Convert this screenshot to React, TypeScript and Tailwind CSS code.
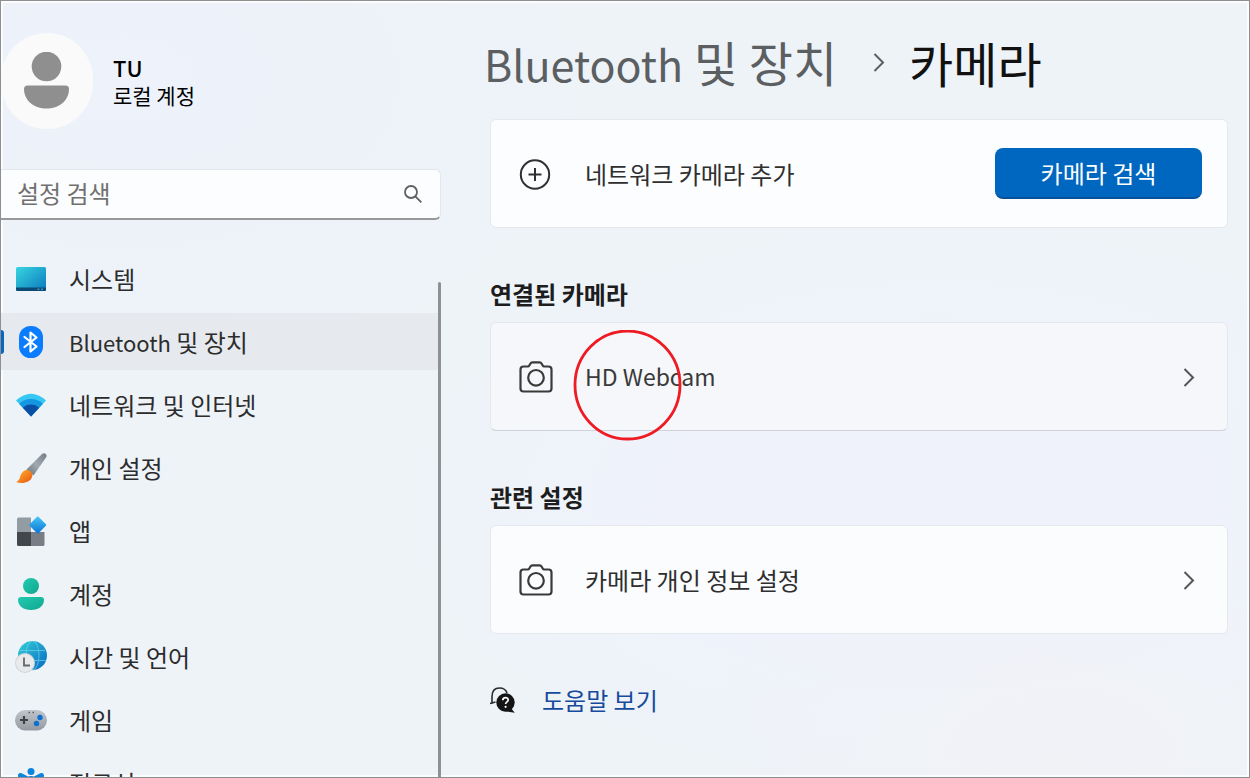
import type { ReactNode } from "react";

function SystemIcon() {
  return (
    <svg width="32" height="32" viewBox="0 0 32 32" aria-hidden="true">
      <defs>
        <linearGradient id="sys" x1="0" y1="0" x2="1" y2="1">
          <stop offset="0" stopColor="#38d5e0" />
          <stop offset="1" stopColor="#0a78bd" />
        </linearGradient>
      </defs>
      <rect x="1" y="4" width="30" height="24" rx="1.5" fill="url(#sys)" />
      <path d="M1 24.5h30v2a1.500 1.500 0 0 1-1.500 1.500h-27a1.500 1.500 0 0 1-1.500-1.500z" fill="#0b4a75" />
      <path d="M22.500 26.200h2M26 26.200h2" stroke="#5fb4d8" strokeWidth="1" />
    </svg>
  );
}

function BluetoothIcon() {
  return (
    <svg width="32" height="32" viewBox="0 0 32 32" aria-hidden="true">
      <rect x="4" y="0" width="24" height="32" rx="11.500" fill="#0a7cff" />
      <path d="M9.500 11l12 9.500-6 5V6.500l6 5-12 9.500" fill="none" stroke="#fff" strokeWidth="2.200" strokeLinejoin="round" strokeLinecap="round" />
    </svg>
  );
}

function NetworkIcon() {
  return (
    <svg width="32" height="32" viewBox="0 0 32 32" aria-hidden="true">
      <defs>
        <clipPath id="fan">
          <path d="M1 11.500Q16-2 31 11.500L16 27.500z" />
        </clipPath>
      </defs>
      <g clipPath="url(#fan)">
        <rect width="32" height="32" fill="#35c8f3" />
        <circle cx="16" cy="27" r="17" fill="#1496e0" />
        <circle cx="16" cy="27" r="11.500" fill="#0a4fa3" />
      </g>
    </svg>
  );
}

function BrushIcon() {
  return (
    <svg width="32" height="32" viewBox="0 0 32 32" aria-hidden="true">
      <defs>
        <linearGradient id="handle" x1="1" y1="0" x2="0" y2="1">
          <stop offset="0" stopColor="#737b83" />
          <stop offset=".5" stopColor="#a2aab1" />
          <stop offset="1" stopColor="#6a7279" />
        </linearGradient>
        <linearGradient id="tip" x1="0" y1="0" x2="1" y2="1">
          <stop offset="0" stopColor="#ffb62e" />
          <stop offset="1" stopColor="#ea5213" />
        </linearGradient>
      </defs>
      <path d="M27 2c2.500-2.200 6 .5 4 3.500L18.500 23.500l-7-6z" fill="url(#handle)" />
      <path d="M1 30c3.500-1.500 3.500-3.500 4.500-6.500 1.500-5 6.500-7 9.500-4.500 4 3 2.500 8-1.500 10.300C9.500 31.500 5 31.500 1 30z" fill="url(#tip)" />
    </svg>
  );
}

function AppsIcon() {
  return (
    <svg width="32" height="32" viewBox="0 0 32 32" aria-hidden="true">
      <defs>
        <linearGradient id="dia" x1="0" y1="0" x2="1" y2="1">
          <stop offset="0" stopColor="#45c7f7" />
          <stop offset="1" stopColor="#0a73d4" />
        </linearGradient>
      </defs>
      <path d="M3.500 2.500H16V17H2V4a1.500 1.500 0 0 1 1.500-1.500z" fill="#939ba3" />
      <path d="M2 17h14v14H3.500A1.500 1.500 0 0 1 2 29.500z" fill="#42474b" />
      <path d="M16 17h13.500v12.500A1.500 1.500 0 0 1 28 31H16z" fill="#777e86" />
      <rect x="16.500" y="3.700" width="12.500" height="12.500" rx="1" transform="rotate(45 22.700 10)" fill="url(#dia)" />
    </svg>
  );
}

function AccountIcon() {
  return (
    <svg width="32" height="32" viewBox="0 0 32 32" aria-hidden="true">
      <defs>
        <linearGradient id="acct" x1="0" y1="0" x2="1" y2="1">
          <stop offset="0" stopColor="#22cbb0" />
          <stop offset="1" stopColor="#10a78f" />
        </linearGradient>
      </defs>
      <circle cx="16" cy="8" r="8" fill="url(#acct)" />
      <path d="M6 19h20q3 0 3 3c0 6-5.500 10-13 10S3 28 3 22q0-3 3-3z" fill="url(#acct)" />
    </svg>
  );
}

function TimeIcon() {
  return (
    <svg width="32" height="32" viewBox="0 0 32 32" aria-hidden="true">
      <defs>
        <linearGradient id="globe" x1="0" y1="0" x2="1" y2="1">
          <stop offset="0" stopColor="#33cfd6" />
          <stop offset="1" stopColor="#0868c4" />
        </linearGradient>
      </defs>
      <circle cx="17.500" cy="14.500" r="14.500" fill="url(#globe)" />
      <g fill="none" stroke="#7fe0ee" strokeWidth="1" opacity=".6">
        <ellipse cx="17.500" cy="14.500" rx="6.500" ry="14.500" />
        <path d="M5 9.500h25M4 19.500h27" />
      </g>
      <circle cx="10" cy="22" r="10" fill="#d2d4d6" />
      <circle cx="10" cy="22" r="9" fill="#e9eaeb" />
      <path d="M9 16.500v8h6" fill="none" stroke="#65696d" strokeWidth="1.800" />
    </svg>
  );
}

function GameIcon() {
  return (
    <svg width="32" height="32" viewBox="0 0 32 32" aria-hidden="true">
      <defs>
        <linearGradient id="pad" x1="0" y1="0" x2="0" y2="1">
          <stop offset="0" stopColor="#c1c6cb" />
          <stop offset="1" stopColor="#9299a1" />
        </linearGradient>
      </defs>
      <rect x="0" y="6" width="32" height="20.500" rx="10.200" fill="url(#pad)" />
      <path d="M9 12v8M5 16h8" stroke="#3e4246" strokeWidth="2.200" />
      <path d="M13.500 8.500h1.500M17.500 8.500h1.500" stroke="#555b60" strokeWidth="1.500" />
      <circle cx="25" cy="13.500" r="2.700" fill="#0a70d2" />
      <circle cx="21.500" cy="19.500" r="2.700" fill="#0a70d2" />
    </svg>
  );
}

function AccessibilityIcon() {
  return (
    <svg width="32" height="32" viewBox="0 0 32 32" aria-hidden="true">
      <circle cx="16" cy="4.500" r="3.500" fill="#0b84e0" />
      <path d="M5.500 8.500l7 3.500h7l7-3.500" fill="none" stroke="#0b84e0" strokeWidth="5" strokeLinecap="round" strokeLinejoin="round" />
      <path d="M16 12v6M16 18l-5 10M16 18l5 10" stroke="#0b84e0" strokeWidth="6" strokeLinecap="round" />
    </svg>
  );
}

function CameraIcon() {
  return (
    <svg width="34" height="32" viewBox="0 0 34 32" fill="none" stroke="#3a3a3a" strokeWidth="2.200" strokeLinejoin="round" aria-hidden="true">
      <path d="M4.500 5.500h4.300q1 0 1.500-1l1-1.800Q12 1.300 13.500 1.300h7q1.500 0 2.200 1.400l1 1.800q.5 1 1.500 1h4.300q3 0 3 3v19q0 3-3 3h-25q-3 0-3-3v-19q0-3 3-3z" />
      <circle cx="17" cy="16.800" r="7.800" />
    </svg>
  );
}

function PlusIcon() {
  return (
    <svg width="34" height="32" viewBox="0 0 34 32" fill="none" stroke="#303030" strokeWidth="2" aria-hidden="true">
      <circle cx="16" cy="16.500" r="14.200" />
      <path d="M16 10v13M9.500 16.500h13" />
    </svg>
  );
}

function Chevron({ className }: { className: string }) {
  return (
    <svg width="12" height="20" viewBox="0 0 12 20" fill="none" stroke="currentColor" strokeWidth="2" className={className} aria-hidden="true">
      <path d="M1.500 2L10 10.500 1.500 19" />
    </svg>
  );
}

function HelpIcon() {
  return (
    <svg width="26" height="28" viewBox="0 0 26 28" aria-hidden="true">
      <path d="M2 17.500V10.500C2 5 5 2 9.500 2c4 0 6.500 2 7.500 5" fill="none" stroke="#2c2c2c" strokeWidth="1.600" />
      <path d="M0 17.500l5.500-1.500" stroke="#2c2c2c" strokeWidth="1.600" />
      <circle cx="15.500" cy="16.500" r="9.200" fill="#151515" />
      <path d="M20 21l4.800 5.800-9.300-1.500z" fill="#151515" />
      <path d="M12.800 14.200c0-3.600 5.400-3.400 5.400-.3 0 2-2.600 2-2.600 4.200" fill="none" stroke="#fff" strokeWidth="1.700" />
      <circle cx="15.600" cy="20.800" r="1.100" fill="#fff" />
    </svg>
  );
}

const items: { label: ReactNode; icon: ReactNode; active?: boolean }[] = [
  { label: "시스템", icon: <SystemIcon /> },
  { label: <><span className="text-[22px]">Bluetooth</span> 및 장치</>, icon: <BluetoothIcon />, active: true },
  { label: "네트워크 및 인터넷", icon: <NetworkIcon /> },
  { label: "개인 설정", icon: <BrushIcon /> },
  { label: "앱", icon: <AppsIcon /> },
  { label: "계정", icon: <AccountIcon /> },
  { label: "시간 및 언어", icon: <TimeIcon /> },
  { label: "게임", icon: <GameIcon /> },
  { label: "접근성", icon: <AccessibilityIcon /> },
];

function Sidebar() {
  return (
    <aside className="flex min-h-0 w-[440px] shrink-0 flex-col">
      <div className="mt-8 flex h-24 shrink-0 items-center gap-5">
        <div className="flex h-24 w-[92px] shrink-0 items-center justify-center rounded-full bg-[#fafafa]">
          <svg width="46" height="58" viewBox="0 0 46 58" fill="#8f8f8f" aria-hidden="true">
            <circle cx="22.500" cy="14.500" r="14.800" />
            <path d="M3.500 33.500h38q3.500 0 3.500 3.500C45 49 34.500 56.500 22.500 56.500S0 49 0 37q0-3.500 3.500-3.500z" />
          </svg>
        </div>
        <div className="pb-1 text-black">
          <p className="text-[22px] leading-8 font-medium">TU</p>
          <p className="text-[21px] leading-6">로컬 계정</p>
        </div>
      </div>
      <label className="mt-10 flex h-[51px] shrink-0 items-center rounded-r-md border border-l-0 border-[#e3e7ea] border-b-2 border-b-[#96989a] bg-[#fcfdfe] pr-[18px] pl-4">
        <input
          type="search"
          aria-label="설정 검색"
          placeholder="설정 검색"
          className="h-10 min-w-0 flex-1 bg-transparent pb-1 text-2xl text-[#333] outline-none placeholder:text-[#707070]"
        />
        <svg width="18" height="18" viewBox="0 0 18 18" fill="none" stroke="#606060" strokeWidth="1.800" aria-hidden="true">
          <circle cx="7" cy="7" r="6" />
          <path d="M11.300 11.300l6 6" />
        </svg>
      </label>
      <div className="mt-[30px] flex min-h-0 flex-1">
        <nav className="min-w-0 flex-1 overflow-hidden">
          <ul className="flex flex-col gap-1.5">
            {items.map((item, index) => (
              <li key={index}>
                <a
                  href="#"
                  aria-current={item.active ? "page" : undefined}
                  className={
                    item.active
                      ? "relative flex h-[57px] items-center gap-[22px] bg-[#e6e9ee] pl-3.5 text-2xl text-[#2c2c2c]"
                      : "flex h-[57px] items-center gap-[22px] pl-3.5 text-2xl text-[#2c2c2c]"
                  }
                >
                  {item.active && <span className="absolute left-0 h-6 w-[3px] rounded-r-sm bg-[#0a67c0]" />}
                  {item.icon}
                  <span>{item.label}</span>
                </a>
              </li>
            ))}
          </ul>
        </nav>
        <div className="mt-8 w-[3px] rounded-t-sm bg-[#8e9193]" />
      </div>
    </aside>
  );
}

export default function App() {
  return (
    <div className="flex h-screen overflow-hidden border border-[#8f8f91] bg-[#eef3f8] bg-[radial-gradient(ellipse_at_10%_10%,#edf2fb_0%,transparent_30%),radial-gradient(ellipse_at_85%_100%,#f1f2f6_0%,transparent_25%),radial-gradient(ellipse_at_75%_65%,#eff2fb_20%,transparent_40%)] font-['Noto_Sans_CJK_KR','Noto_Sans',sans-serif] shadow-[inset_0_0_0_2px_#fbfcfd]">
      <Sidebar />
      <main className="min-w-0 flex-1 pr-[21px] pl-[49px]">
        <h1 className="-ml-1.5 flex items-center pt-7 text-5xl leading-[64px] whitespace-nowrap text-[#111]">
          <a href="#" className="text-[#5c5f62]">
            <span className="text-[43px]">Bluetooth</span> 및 장치
          </a>
          <Chevron className="mr-6 ml-9 shrink-0 text-[#5c5f62]" />
          <span>카메라</span>
        </h1>
        <section className="mt-6 flex h-[109px] items-center rounded-md border border-[#e5e8ec] bg-[#fcfdfe] pr-[25px] pl-7">
          <PlusIcon />
          <span className="ml-8 flex-1 text-2xl text-[#2f2f2f]">네트워크 카메라 추가</span>
          <button type="button" className="h-[51px] w-[207px] rounded-lg border-b-2 border-[#09509b] bg-[#0067c0] text-2xl text-white">
            카메라 검색
          </button>
        </section>
        <h2 className="mt-12 text-2xl leading-9 font-bold text-[#1d1d1d]">연결된 카메라</h2>
        <a href="#" className="relative mt-2.5 flex h-[109px] items-center rounded-md border border-[#e5e8ec] border-b-[#cfd2d7] bg-[#f5f7fa] pr-8 pl-7">
          <CameraIcon />
          <span className="ml-8 flex-1 text-[23px] text-[#3a3a3a]">HD Webcam</span>
          <Chevron className="text-[#555]" />
          <svg className="absolute top-[7px] left-[82px]" width="109" height="111" viewBox="0 0 109 111" aria-hidden="true">
            <ellipse cx="54.500" cy="55" rx="52.500" ry="54" fill="none" stroke="#ee1b24" strokeWidth="2.800" />
          </svg>
        </a>
        <h2 className="mt-12 text-2xl leading-9 font-bold text-[#1d1d1d]">관련 설정</h2>
        <a href="#" className="mt-2.5 flex h-[109px] items-center rounded-md border border-[#e5e8ec] bg-[#fbfcfe] pr-8 pl-7">
          <CameraIcon />
          <span className="ml-8 flex-1 text-2xl text-[#2f2f2f]">카메라 개인 정보 설정</span>
          <Chevron className="text-[#555]" />
        </a>
        <a href="#" className="mt-12 inline-flex items-center gap-[26px] text-2xl leading-9 text-[#164a9c]">
          <HelpIcon />
          <span>도움말 보기</span>
        </a>
      </main>
    </div>
  );
}
